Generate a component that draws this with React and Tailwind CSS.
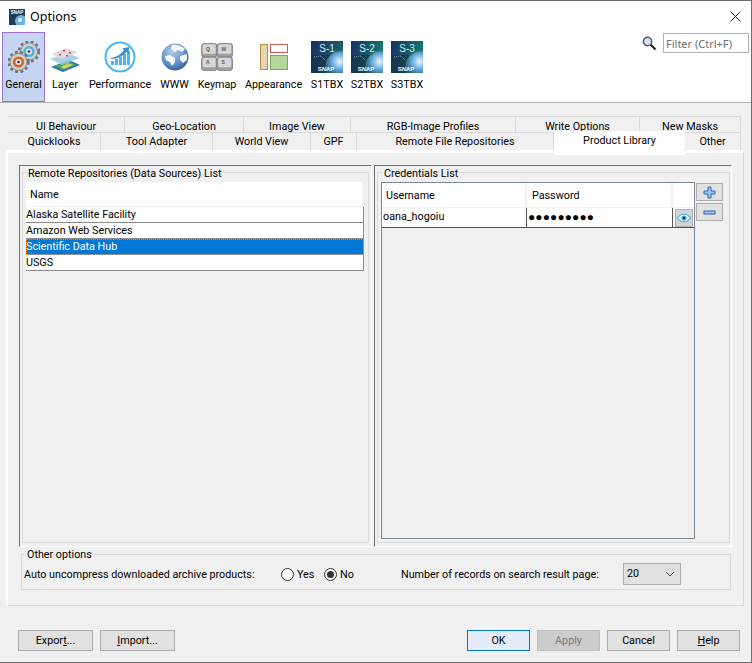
const font = "font-['Roboto','Liberation_Sans',sans-serif]";

function Gear({ cx, cy, r, c }) {
  return (
    <g>
      <circle cx={cx} cy={cy} r={r} fill="#8b8b8b" />
      <circle cx={cx} cy={cy} r={r + 1} fill="none" stroke="#707070" strokeWidth="2.4" strokeDasharray="2.8 2.6" />
      <circle cx={cx} cy={cy} r={r - 1} fill="#d0d0d0" />
      <circle cx={cx} cy={cy} r={r - 3.4} fill={c} />
      <circle cx={cx} cy={cy} r={r - 6} fill="#e4e8ea" />
      <circle cx={cx} cy={cy} r={1.3} fill="#333" />
    </g>
  );
}
const Gears = () => (
  <svg width="32" height="32" viewBox="0 0 32 32" className="block">
    <Gear cx={21} cy={10.5} r={9} c="#4fb4d8" />
    <Gear cx={10.5} cy={21} r={9} c="#d8641e" />
  </svg>
);
const LayerIcon = () => (
  <svg width="32" height="26" viewBox="0 0 32 26" className="block">
    <polygon points="2,20 20,13 31,18 14,25" fill="#2a6fb8" />
    <polygon points="5,19 19,14 27,18 14,23" fill="#4aa85a" />
    <polygon points="12,20 19,16 24,18 15,22" fill="#d8cf60" />
    <polygon points="1,12 18,6 31,11 13,18" fill="#9cc8e8" fillOpacity="0.85" />
    <polygon points="3,7 17,1 29,5 13,12" fill="#d9dde2" />
    <g fill="#d9403a">
      <rect x="14" y="3" width="2" height="1.5" />
      <rect x="20" y="5" width="2" height="1.5" />
      <rect x="10" y="7" width="2" height="1.5" />
      <rect x="17" y="8" width="2" height="1.5" />
    </g>
  </svg>
);
const PerfIcon = () => (
  <svg width="32" height="32" viewBox="0 0 32 32" className="block">
    <circle cx="16" cy="16" r="14.5" fill="#fff" stroke="#44b7f4" strokeWidth="2" />
    <g fill="#44b7f4">
      <rect x="7" y="20" width="3" height="4" />
      <rect x="11" y="18" width="3" height="6" />
      <rect x="15" y="16" width="3" height="8" />
      <rect x="19" y="13" width="3" height="11" />
      <rect x="23" y="10" width="3" height="14" />
    </g>
    <path d="M7 17 C13 16 17 13 20 9 L18 7.5 L25 6 L24.5 13 L22.5 11 C19 15 14 18 7 18 Z" fill="#3a8fcc" />
  </svg>
);
const Globe = () => (
  <svg width="28" height="28" viewBox="0 0 28 28" className="block">
    <defs>
      <radialGradient id="gl" cx="0.4" cy="0.3" r="0.8">
        <stop offset="0" stopColor="#b5cdea" />
        <stop offset="0.6" stopColor="#5f8fc8" />
        <stop offset="1" stopColor="#2c4f88" />
      </radialGradient>
    </defs>
    <circle cx="14" cy="14" r="13.5" fill="url(#gl)" />
    <path d="M11 2 C15 1 20 2 24 6 L21 9 L17 7 L14 9 L10 6 Z" fill="#f4f6f8" />
    <path d="M4 13 L9 12 L14 15 L14 19 L11 23 L9 19 L5 17 Z" fill="#f4f6f8" />
    <path d="M19 13 L26 11 L26 17 L22 20 L19 17 Z" fill="#f4f6f8" />
  </svg>
);
const Key = ({ x, y, l }) => (
  <g>
    <rect x={x} y={y} width="15.5" height="13.5" rx="2.5" fill="#a0a0a0" stroke="#7c7c7c" strokeWidth="0.8" />
    <rect x={x + 1.2} y={y + 0.8} width="13" height="9.5" rx="1.5" fill="#d6d6d6" />
    <text x={x + 4.5} y={y + 7} fontSize="5" fontWeight="700" fill="#555" fontFamily="Liberation Sans">{l}</text>
  </g>
);
const Keys = () => (
  <svg width="32" height="28" viewBox="0 0 32 28" className="block">
    <Key x={0.5} y={0.5} l="Q" />
    <Key x={16} y={0.5} l="W" />
    <Key x={0.5} y={14} l="A" />
    <Key x={16} y={14} l="S" />
  </svg>
);
const Appear = () => (
  <svg width="28" height="27" viewBox="0 0 28 27" className="block">
    <rect x="0.5" y="0.5" width="7" height="25" fill="#e8d5ae" stroke="#b08d4a" />
    <rect x="10.5" y="0.5" width="17" height="8" fill="#fff" stroke="#d05a4e" />
    <rect x="10.5" y="11.5" width="17" height="14" fill="#b5d99a" stroke="#7fa650" />
  </svg>
);
const Sat = ({ n, id }) => (
  <svg width="32" height="32" viewBox="0 0 32 32" className="block">
    <defs>
      <linearGradient id={id} x1="0" y1="0" x2="1" y2="0.3">
        <stop offset="0" stopColor="#1b2d66" />
        <stop offset="1" stopColor={n === 1 ? "#1c5f6c" : "#137a6c"} />
      </linearGradient>
      <radialGradient id={`${id}e`} cx="0.45" cy="0.35" r="0.6">
        <stop offset="0" stopColor="#eef6fa" />
        <stop offset="0.45" stopColor="#5ea8dc" />
        <stop offset="1" stopColor="#143844" />
      </radialGradient>
    </defs>
    <rect width="32" height="32" fill={`url(#${id})`} />
    <rect y="14" width="32" height="18" fill="#16303c" fillOpacity="0.6" />
    <circle cx="30" cy="25" r="15" fill={`url(#${id}e)`} stroke="#4a7a7c" strokeWidth="1" />
    <path d="M3 16 L10 15 L14 19" fill="none" stroke="#9ab" strokeWidth="1" strokeDasharray="1 1" />
    <text x="16" y="10.5" textAnchor="middle" fontSize="10" fill="#c8f4ee" fontFamily="Liberation Sans">{`S-${n}`}</text>
    <text x="15" y="30" textAnchor="middle" fontSize="6" fontWeight="700" fill="#fff" fontFamily="Liberation Sans">SNAP</text>
  </svg>
);

const TB = [
  { l: "General", w: "w-[43px]", i: <Gears />, active: true },
  { l: "Layer", w: "w-[40px]", i: <LayerIcon />, h: "pt-[15px]" },
  { l: "Performance", w: "w-[70px]", i: <PerfIcon /> },
  { l: "WWW", w: "w-[39px]", i: <Globe />, h: "pt-[11px]" },
  { l: "Keymap", w: "w-[46px]", i: <Keys />, h: "pt-[11px]" },
  { l: "Appearance", w: "w-[67px]", i: <Appear />, h: "pt-[12px]" },
  { l: "S1TBX", w: "w-[40px]", i: <Sat n={1} id="s1" /> },
  { l: "S2TBX", w: "w-[40px]", i: <Sat n={2} id="s2" /> },
  { l: "S3TBX", w: "w-[40px]", i: <Sat n={3} id="s3" /> },
];

function ToolItem({ t }) {
  return (
    <div className={`${t.w} h-[70px] flex flex-col items-center ${t.active ? "bg-[#c3d5f0] border border-[#9b71cf]" : ""}`}>
      <div className={`${t.active ? "h-[45px] pt-[8px]" : `h-[46px] ${t.h || "pt-[9px]"}`}`}>{t.i}</div>
      <div className="text-[10.75px] leading-[13px] whitespace-nowrap">{t.l}</div>
    </div>
  );
}

const Tab = ({ w, children, cls = "pt-[1px]" }) => (
  <div className={`${w} h-full border-t border-r border-[#d9d9d9] flex items-center justify-center text-[10.75px] leading-none whitespace-nowrap ${cls}`}>
    {children}
  </div>
);

const Row = ({ children, sel }) => (
  <div className={`h-[16px] border-b border-r border-[#8a8a8a] text-[10.75px] leading-[15px] whitespace-nowrap ${sel ? "bg-[#0078d7] text-white outline-1 -outline-offset-1 outline-dotted outline-[#f08a30]" : "bg-white"}`}>
    {children}
  </div>
);

const Btn = ({ w, children, cls = "bg-[#e1e1e1] border-[#adadad]" }) => (
  <div className={`${w} h-[21px] border ${cls} flex items-center justify-center pt-[1px] text-[10.75px] leading-none`}>{children}</div>
);

const Legend = ({ children, cls = "ml-[3px] leading-[15px]" }) => (
  <legend className={`h-[13px] px-[2px] text-[10.75px] whitespace-nowrap ${cls}`}>{children}</legend>
);

const Radio = ({ on }) => (
  <span className="w-[13px] h-[13px] rounded-full border border-[#333] bg-white flex items-center justify-center">
    {on && <span className="w-[7px] h-[7px] rounded-full bg-[#333]" />}
  </span>
);

export default function App() {
  return (
    <div className={`w-[752px] h-[663px] bg-[#f0f0f0] text-black flex flex-col overflow-hidden border-t border-r border-b border-[#6e6e6e] ${font}`}>
      <div className="h-[31px] bg-white flex items-center pl-[9px] pr-[10px] shrink-0">
        <svg width="16" height="16" viewBox="0 0 16 16" className="block">
          <rect width="16" height="16" fill="#1d3a5c" />
          <circle cx="12" cy="12" r="6" fill="#6fb3e0" />
          <circle cx="11" cy="11" r="2" fill="#e8f2f8" />
          <text x="8" y="5" textAnchor="middle" fontSize="4.5" fontWeight="700" fill="#fff" fontFamily="Liberation Sans">SNAP</text>
        </svg>
        <span className="ml-[5px] pt-[1px] text-[12.5px] leading-none font-['Noto_Sans',sans-serif]">Options</span>
        <svg width="11" height="11" viewBox="0 0 11 11" className="ml-auto block">
          <path d="M0.5 0.5 L10.5 10.5 M10.5 0.5 L0.5 10.5" stroke="#222" strokeWidth="1" fill="none" />
        </svg>
      </div>

      <div className="h-[71px] bg-white border-b border-[#b5b5b5] flex pl-[2px] shrink-0">
        {TB.map((t) => (
          <ToolItem key={t.l} t={t} />
        ))}
        <div className="ml-auto flex items-start pr-[2px] pt-[1px]">
          <svg width="15" height="15" viewBox="0 0 15 15" className="mt-[3px] block">
            <circle cx="5.5" cy="5.5" r="4.2" fill="#cfe3f4" stroke="#556" strokeWidth="1.4" />
            <path d="M8.8 8.8 L13.5 13.5" stroke="#222" strokeWidth="2.2" />
          </svg>
          <div className="ml-[6px] w-[86px] h-[20px] border border-[#b0b0b0] bg-white flex items-center pl-[2px] text-[11px] leading-none text-[#6d6d6d] whitespace-nowrap font-['Noto_Sans',sans-serif]">
            Filter (Ctrl+F)
          </div>
        </div>
      </div>

      <div className="h-[13px] shrink-0" />

      <div className="h-[16px] flex pl-[8px] shrink-0 overflow-hidden">
        <Tab w="w-[117px]" cls="pt-[5px]">UI Behaviour</Tab>
        <Tab w="w-[119px]" cls="pt-[5px]">Geo-Location</Tab>
        <Tab w="w-[107px]" cls="pt-[5px]">Image View</Tab>
        <Tab w="w-[165px]" cls="pt-[5px]">RGB-Image Profiles</Tab>
        <Tab w="w-[124px]" cls="pt-[5px]">Write Options</Tab>
        <Tab w="w-[101px]" cls="pt-[5px]">New Masks</Tab>
      </div>
      <div className="h-[18px] flex pl-[8px] shrink-0">
        <Tab w="w-[93px]">Quicklooks</Tab>
        <Tab w="w-[112px]">Tool Adapter</Tab>
        <Tab w="w-[98px]">World View</Tab>
        <Tab w="w-[46px]">GPF</Tab>
        <Tab w="w-[197px]">Remote File Repositories</Tab>
        <div className="w-[131px] h-[24px] -mt-[1px] bg-white flex justify-center pt-[3px] text-[10.75px] leading-[13px] whitespace-nowrap relative">
          Product Library
        </div>
        <Tab w="w-[56px]">Other</Tab>
      </div>

      <div className="ml-[6px] w-[738px] h-[456px] shrink-0 border-l-2 border-t-[3px] border-white border-r border-b border-r-[#d9d9d9] border-b-[#d9d9d9] pl-[11px] pt-[12px] flex flex-col">
        <div className="flex h-[382px] shrink-0 w-[713px]">
          <div className="w-[353px] h-full border-t border-l border-[#707070] border-r border-b border-r-white border-b-white pl-[2px] shrink-0">
            <fieldset className="w-[347px] h-[377px] border border-[#d9d9d9]">
              <Legend>Remote Repositories (Data Sources) List</Legend>
              <div className="pl-[3px] pt-[3px]">
                <div className="w-[336px] h-[25px] bg-white border-b border-[#f0f0f0] flex items-center pl-[4px] pt-[3px] text-[10.75px] leading-none">Name</div>
                <div className="w-[338px] flex flex-col">
                  <Row>Alaska Satellite Facility</Row>
                  <Row>Amazon Web Services</Row>
                  <Row sel>Scientific Data Hub</Row>
                  <Row>USGS</Row>
                </div>
              </div>
            </fieldset>
          </div>
          <div className="w-[358px] ml-[2px] h-full border-t border-l border-[#707070] border-r border-b border-r-white border-b-white pl-[2px] shrink-0">
            <fieldset className="w-[353px] h-[377px] border border-[#d9d9d9]">
              <Legend cls="ml-[4px] leading-[15px]">Credentials List</Legend>
              <div className="flex pl-[3px] pt-[3px]">
                <div className="w-[314px] h-[357px] border border-[#7d8a96] flex flex-col">
                  <div className="h-[25px] bg-white flex text-[10.75px] leading-none border-b border-[#f0f0f0]">
                    <div className="w-[145px] border-r-2 border-[#f0f0f0] flex items-center pl-[4px] pt-[3px]">Username</div>
                    <div className="w-[146px] border-r-2 border-[#f0f0f0] flex items-center pl-[5px] pt-[3px]">Password</div>
                    <div className="flex-1" />
                  </div>
                  <div className="h-[20px] flex border-b border-[#555] text-[10.75px] leading-none">
                    <div className="w-[145px] bg-white border-r border-[#555] flex items-center pl-[1px] pb-[1px]">oana_hogoiu</div>
                    <div className="w-[146px] bg-white border-r border-[#555] flex items-center pl-[1px] pb-[1px] text-[12px] font-['Noto_Sans',sans-serif] tracking-[0.1px]">●●●●●●●●●</div>
                    <div className="flex-1 flex items-center justify-center px-[1px] bg-white">
                      <div className="w-[18px] h-[18px] bg-[#d4d4d4] border border-[#adadad] flex items-center justify-center">
                        <svg width="14" height="10" viewBox="0 0 14 10" className="block">
                          <path d="M0.5 5 C4 0 10 0 13.5 5 C10 10 4 10 0.5 5 Z" fill="#fff" stroke="#3fb0e8" strokeWidth="1.2" />
                          <circle cx="7" cy="5" r="2.6" fill="#3fb0e8" />
                          <circle cx="7" cy="5" r="1.3" fill="#123" />
                        </svg>
                      </div>
                    </div>
                  </div>
                </div>
                <div className="ml-[1px] flex flex-col gap-[2px] pt-[1px]">
                  <div className="w-[27px] h-[18px] bg-[#e1e1e1] border border-[#adadad] flex items-center justify-center">
                    <svg width="13" height="13" viewBox="0 0 13 13" className="block">
                      <path d="M5 1 H8 V5 H12 V8 H8 V12 H5 V8 H1 V5 H5 Z" fill="#9cc3ea" stroke="#2a68b8" strokeWidth="1" />
                    </svg>
                  </div>
                  <div className="w-[27px] h-[18px] bg-[#e1e1e1] border border-[#adadad] flex items-center justify-center">
                    <svg width="13" height="5" viewBox="0 0 13 5" className="block">
                      <rect x="1" y="1" width="11" height="3" fill="#9cc3ea" stroke="#2a68b8" strokeWidth="1" />
                    </svg>
                  </div>
                </div>
              </div>
            </fieldset>
          </div>
        </div>

        <fieldset className="ml-[2px] mt-[1px] w-[710px] h-[42px] border border-[#d9d9d9] shrink-0">
          <Legend cls="ml-[3px] leading-[13px]">Other options</Legend>
          <div className="flex items-center h-[22px] text-[10.75px] leading-[12px] whitespace-nowrap pl-[2px] mt-[2px]">
            <span className="w-[257px] pt-[1px]">Auto uncompress downloaded archive products:</span>
            <Radio />
            <span className="ml-[3px] w-[27px] pt-[1px]">Yes</span>
            <Radio on />
            <span className="ml-[3px] w-[61px] pt-[1px]">No</span>
            <span className="w-[222px] pt-[1px]">Number of records on search result page:</span>
            <div className="w-[58px] h-[22px] bg-[#e1e1e1] border border-[#adadad] flex items-center pl-[3px]">
              <span>20</span>
              <svg width="10" height="6" viewBox="0 0 10 6" className="ml-auto mr-[5px] block">
                <path d="M1 1 L5 5 L9 1" fill="none" stroke="#555" strokeWidth="1" />
              </svg>
            </div>
          </div>
        </fieldset>
      </div>

      <div className="flex pl-[18px] pt-[24px] shrink-0">
        <Btn w="w-[75px]"><span>Expor<u>t</u>...</span></Btn>
        <div className="w-[7px]" />
        <Btn w="w-[75px]"><span><u>I</u>mport...</span></Btn>
        <div className="w-[292px]" />
        <Btn w="w-[63px]" cls="bg-[#e3ebf6] border-[#0078d7]">OK</Btn>
        <div className="w-[7px]" />
        <Btn w="w-[63px]" cls="bg-[#cccccc] border-[#bfbfbf] text-[#7a7a7a]">Apply</Btn>
        <div className="w-[7px]" />
        <Btn w="w-[63px]">Cancel</Btn>
        <div className="w-[7px]" />
        <Btn w="w-[63px]"><span><u>H</u>elp</span></Btn>
      </div>
    </div>
  );
}
